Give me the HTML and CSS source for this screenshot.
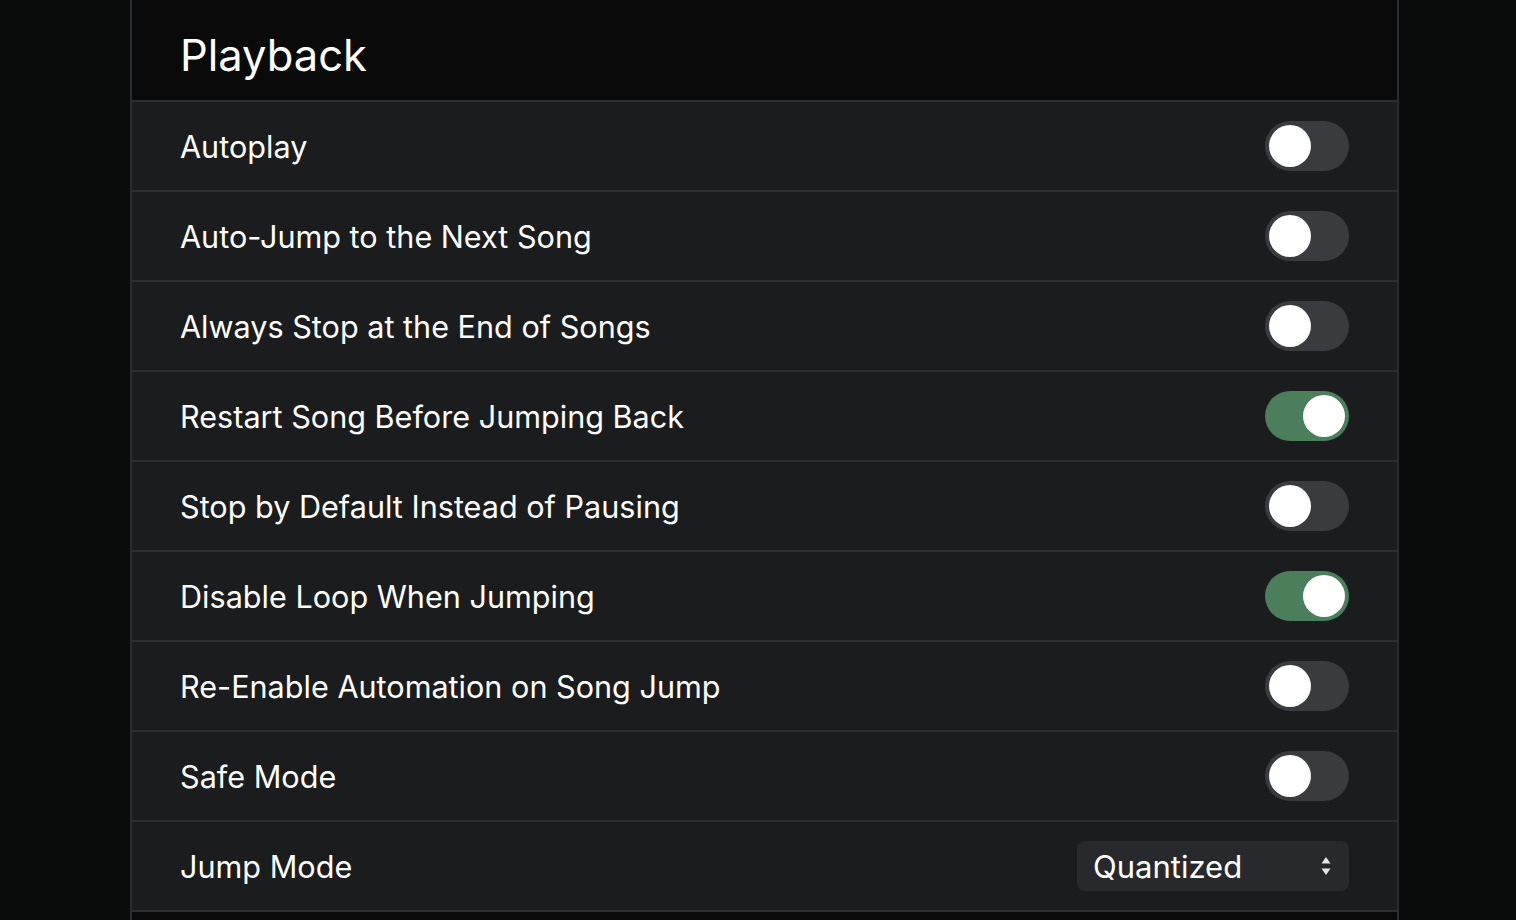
FILE: index.html
```html
<!DOCTYPE html>
<html>
<head>
<meta charset="utf-8">
<link rel="stylesheet" href="styles.css">
</head>
<body>
<div class="panel">
  <div class="header"><h1>Playback</h1></div>
  <div class="row"><span class="label">Autoplay</span><span class="toggle"><span class="knob"></span></span></div>
  <div class="row"><span class="label">Auto-Jump to the Next Song</span><span class="toggle"><span class="knob"></span></span></div>
  <div class="row"><span class="label">Always Stop at the End of Songs</span><span class="toggle"><span class="knob"></span></span></div>
  <div class="row"><span class="label">Restart Song Before Jumping Back</span><span class="toggle on"><span class="knob"></span></span></div>
  <div class="row"><span class="label">Stop by Default Instead of Pausing</span><span class="toggle"><span class="knob"></span></span></div>
  <div class="row"><span class="label">Disable Loop When Jumping</span><span class="toggle on"><span class="knob"></span></span></div>
  <div class="row"><span class="label">Re-Enable Automation on Song Jump</span><span class="toggle"><span class="knob"></span></span></div>
  <div class="row"><span class="label">Safe Mode</span><span class="toggle"><span class="knob"></span></span></div>
  <div class="row"><span class="label">Jump Mode</span>
    <span class="select"><span class="select-text">Quantized</span>
      <svg class="arrows" width="12" height="22" viewBox="0 0 12 22"><path d="M6 2 L10.5 8.5 H1.5 Z" fill="#e6e6e6"/><path d="M6 20 L10.5 13.5 H1.5 Z" fill="#e6e6e6"/></svg>
    </span>
  </div>
  <div class="footer"></div>
</div>
</body>
</html>
```

FILE: styles.css
```css
html, body {
  margin: 0;
  padding: 0;
  background: #0a0b0b;
  height: 100%;
  overflow: hidden;
}
body {
  font-family: Inter, "Noto Sans", sans-serif;
  color: #ffffff;
}
.panel {
  margin-left: 130px;
  width: 1265px;
  height: 920px;
  border-left: 2px solid #2d2e31;
  border-right: 2px solid #2d2e31;
  overflow: hidden;
}
.header {
  height: 102px;
  background: #0a0a0a;
  border-bottom: 2px solid #2d2e31;
  box-sizing: border-box;
  padding-left: 48px;
  display: flex;
  align-items: center;
}
.header h1 {
  margin: 0;
  font-size: 43.5px;
  font-weight: 400;
  letter-spacing: 0;
  padding-top: 10px;
}
.row {
  height: 90px;
  box-sizing: border-box;
  background: #1b1c1e;
  border-bottom: 2px solid #2d2e31;
  display: flex;
  align-items: center;
  justify-content: space-between;
  padding: 0 48px;
}
.footer {
  height: 40px;
  background: #0a0a0a;
}
.label {
  font-size: 30.6px;
  font-weight: 400;
}
.toggle {
  width: 84px;
  height: 50px;
  border-radius: 25px;
  background: #393b3f;
  box-sizing: border-box;
  padding: 4px;
  display: flex;
  justify-content: flex-start;
}
.toggle.on {
  background: #4b7f5c;
  justify-content: flex-end;
}
.knob {
  width: 42px;
  height: 42px;
  border-radius: 50%;
  background: #ffffff;
}
.select {
  width: 272px;
  height: 50px;
  border-radius: 8px;
  background: #28292d;
  box-sizing: border-box;
  padding: 0 16px;
  display: flex;
  align-items: center;
  justify-content: space-between;
}
.select-text {
  font-size: 31px;
}
.arrows {
  margin-right: 1px;
}
```
